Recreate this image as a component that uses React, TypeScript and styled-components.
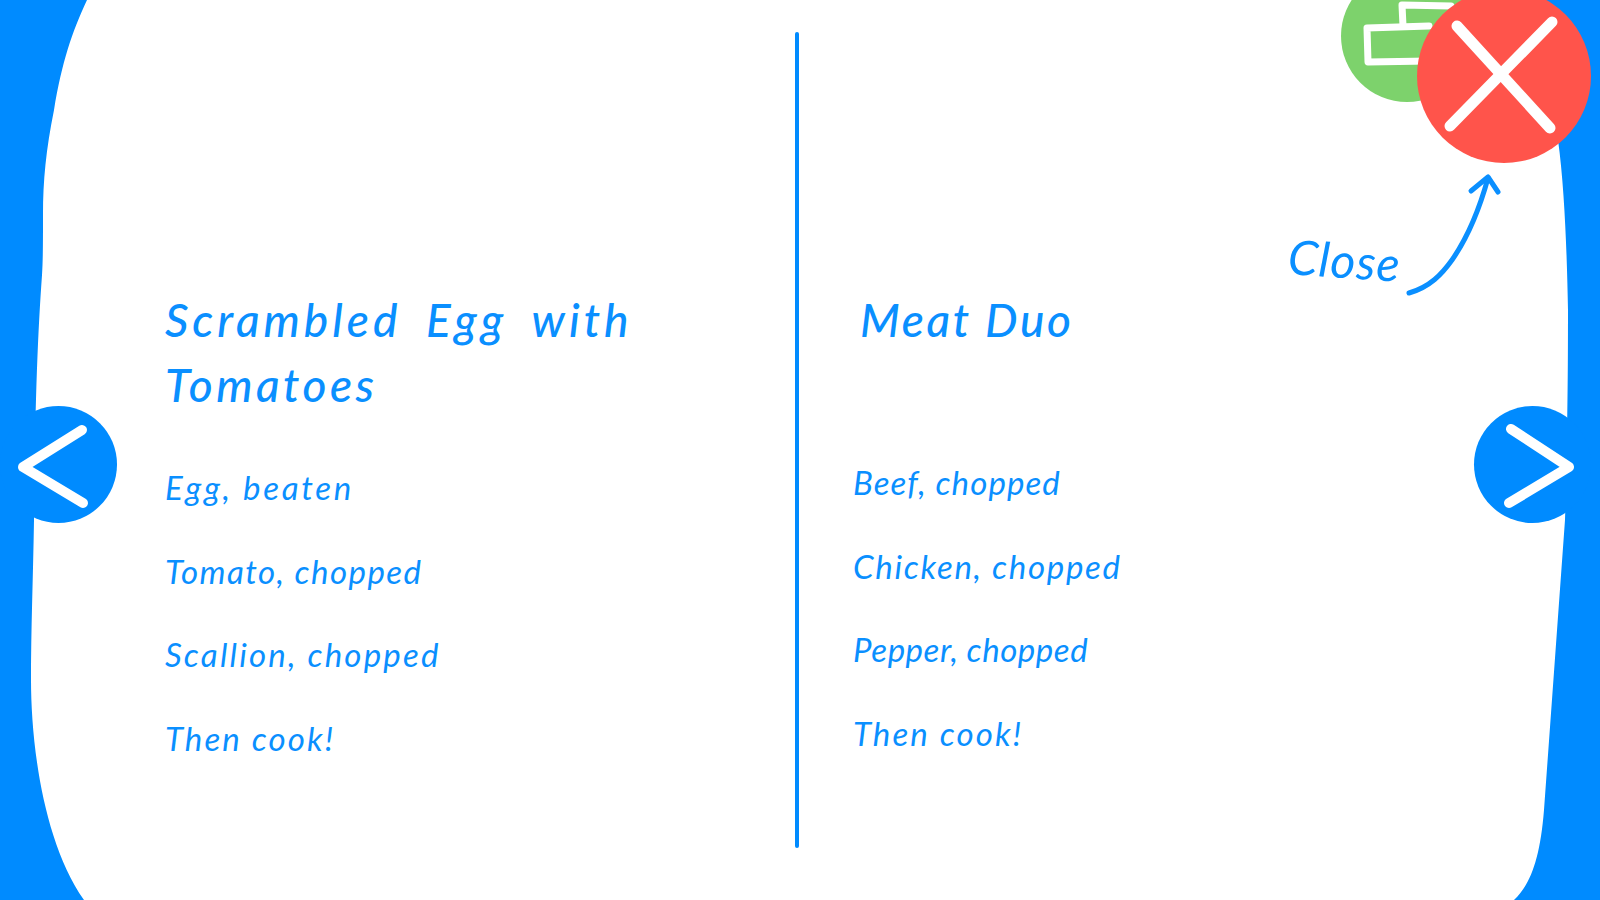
import styled, { createGlobalStyle } from 'styled-components';

const BLUE = '#008bff';
const INK = '#0a8fff';

const Global = createGlobalStyle`
html, body {
    margin: 0;
    padding: 0;
    background: ${BLUE};
}
`

const Page = styled.main`
position: relative;
width: 1600px;
height: 900px;
overflow: hidden;
background: ${BLUE};
font-family: "Lato", "Open Sans", sans-serif;
font-style: italic;
color: ${INK};
`

// the paper sheet with its wobbly hand drawn edge
const Sheet = styled.div`
width: 100%;
height: 100%;
background: #fff;
display: grid;
grid-template-columns: 795px 4px 1fr;
clip-path: path('M87 0 C72 32 62 62 54 110 C46 150 43 180 43 215 C43 240 43 260 42 275 C38 330 35 400 34 520 C33 580 31 630 31 680 C31 740 42 840 84 900 L1514 900 C1530 885 1540 860 1544 810 L1565 520 C1568 420 1568 350 1568 310 C1567 260 1565 190 1558 140 C1552 90 1545 40 1530 0 Z');
`

const Divider = styled.div`
margin: 32px 0 52px;
background: ${BLUE};
border-radius: 2px;
`

const Column = styled.section<{ $left: number; $titleLeft: number; $listTop: number }>`
padding: 287px 0 0 ${p => p.$left}px;

& h2 {
    margin: 0 0 ${p => p.$listTop}px ${p => p.$titleLeft}px;
    height: 130px;
    font-size: 46px;
    line-height: 65px;
    font-weight: 500;
}

& ul {
    list-style: none;
    margin: 0;
    padding: 0;
    display: flex;
    flex-direction: column;
    gap: 45.5px;
}
`

const TitleLine = styled.span<{ $track: number; $words?: number }>`
display: block;
letter-spacing: ${p => p.$track}px;
word-spacing: ${p => p.$words || 0}px;
`

const Ingredient = styled.li<{ $track: number }>`
font-size: 33px;
line-height: 38px;
letter-spacing: ${p => p.$track}px;
`

const Round = styled.button<{ $bg: string; $size: number }>`
position: relative;
flex: none;
width: ${p => p.$size}px;
height: ${p => p.$size}px;
padding: 0;
border: 0;
border-radius: 50%;
background: ${p => p.$bg};

& svg {
    position: absolute;
    inset: 0;
    overflow: visible;
}
`

const PagerBar = styled.nav`
position: absolute;
left: 0;
right: 9px;
top: 406px;
display: flex;
justify-content: space-between;
`

// the green button sits partly under the red one, both run off the top edge
const CornerActions = styled.div`
position: absolute;
left: 1341px;
top: -30px;
display: flex;
align-items: flex-start;

& > button + button {
    margin: 19px 0 0 -56px;
}
`

const CloseNote = styled.div`
position: absolute;
left: 1288px;
top: 170px;
display: flex;
align-items: flex-end;
`

const NoteLabel = styled.span`
width: 112px;
margin-bottom: 7px;
font-size: 48px;
line-height: 56px;
letter-spacing: 1px;
transform: rotate(4deg);
`

const NoteArrow = styled.svg`
overflow: visible;
`

const recipes = [
    {
        title: [
            { text: 'Scrambled Egg with', track: 4, words: 10 },
            { text: 'Tomatoes', track: 3.5 },
        ],
        left: 165,
        titleLeft: 0,
        listTop: 51,
        items: [
            { text: 'Egg, beaten', track: 2.7 },
            { text: 'Tomato, chopped', track: 1.45 },
            { text: 'Scallion, chopped', track: 2.2 },
            { text: 'Then cook!', track: 2.1 },
        ],
    },
    {
        title: [{ text: 'Meat Duo', track: 2.6 }],
        left: 54,
        titleLeft: 7,
        listTop: 46,
        items: [
            { text: 'Beef, chopped', track: 1.1 },
            { text: 'Chicken, chopped', track: 1.7 },
            { text: 'Pepper, chopped', track: 0.55 },
            { text: 'Then cook!', track: 2.1 },
        ],
    },
];

const Recipe = ({ recipe }) => (
    <Column $left={recipe.left} $titleLeft={recipe.titleLeft} $listTop={recipe.listTop}>
        <h2>
            {recipe.title.map(line => <TitleLine key={line.text} $track={line.track} $words={line.words}>{line.text}</TitleLine>)}
        </h2>
        <ul>
            {recipe.items.map(item => <Ingredient key={item.text} $track={item.track}>{item.text}</Ingredient>)}
        </ul>
    </Column>
)

function App() {
    return (
        <Page>
            <Global />
            <Sheet>
                <Recipe recipe={recipes[0]} />
                <Divider />
                <Recipe recipe={recipes[1]} />
            </Sheet>

            <PagerBar>
                <Round $bg={BLUE} $size={117} aria-label="Previous">
                    <svg width="117" height="117" fill="none" stroke="#fff" strokeWidth="10" strokeLinecap="round" strokeLinejoin="round">
                        <path d="M82 24 L23 61 L83 97" />
                    </svg>
                </Round>
                <Round $bg={BLUE} $size={117} aria-label="Next">
                    <svg width="117" height="117" fill="none" stroke="#fff" strokeWidth="10" strokeLinecap="round" strokeLinejoin="round">
                        <path d="M37 23 L95 61 L35 97" />
                    </svg>
                </Round>
            </PagerBar>

            <CornerActions>
                <Round $bg="#7dd26c" $size={132} aria-label="Share">
                    <svg width="132" height="132" fill="none" stroke="#fff" strokeWidth="7" strokeLinecap="round" strokeLinejoin="round">
                        <path d="M26 58 L88 56 M26 58 L27 92 L88 91" />
                        <path d="M62 56 L61 35 L110 36" />
                    </svg>
                </Round>
                <Round $bg="#ff544b" $size={174} aria-label="Close">
                    <svg width="174" height="174" fill="none" stroke="#fff" strokeWidth="11" strokeLinecap="round">
                        <path d="M40 37 L133 139" />
                        <path d="M135 33 L33 137" />
                    </svg>
                </Round>
            </CornerActions>

            <CloseNote>
                <NoteLabel>Close</NoteLabel>
                <NoteArrow width="100" height="125" fill="none" stroke={INK} strokeWidth="5" strokeLinecap="round" strokeLinejoin="round">
                    <path d="M9 123 C30 117 42 104 52 90 C68 67 80 37 88 8" />
                    <path d="M71 21 L88 7 L98 22" />
                </NoteArrow>
            </CloseNote>
        </Page>
    );
}

export default App;
